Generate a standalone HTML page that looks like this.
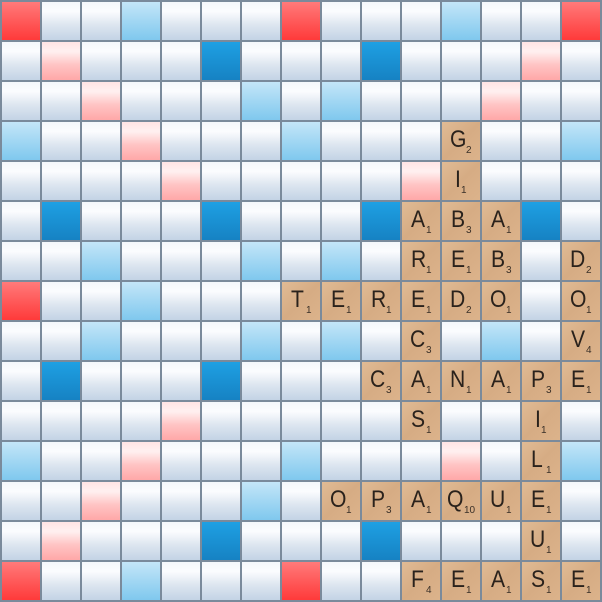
<!DOCTYPE html>
<html><head><meta charset="utf-8"><style>
html,body{margin:0;padding:0;background:#7a8a9b;}
#b{position:relative;width:602px;height:602px;background:#7a8a9b;}
.c{position:absolute;width:38px;height:38px;background:linear-gradient(#f4f7fb 0%,#fbfcfe 25%,#dde6f0 60%,#c3d3e5 100%);}
.tw{background:linear-gradient(#ff7a7a,#ff3a3a);}
.dw{background:linear-gradient(#ffe4e4 0%,#fff0f0 25%,#ffc4c4 60%,#ffa8a8 100%);}
.tl{background:linear-gradient(#1ea0e3,#1682c3);}
.dl{background:linear-gradient(#c4e6f8,#7fc8ee);}
.t{background:linear-gradient(135deg,#e0bb95,#d6ac84 50%,#dcb38b);font-family:"Liberation Sans",sans-serif;color:#2a221c;}
.t span{position:absolute;top:6px;font-size:24px;line-height:1;transform:scaleX(0.88);transform-origin:left top;}
.t i{position:absolute;font-style:normal;font-size:10px;line-height:1;top:24px;color:#3a3028;}
</style></head><body><div id="b"></div>
<script>
var TW=[[0,0],[0,7],[0,14],[7,0],[7,14],[14,0],[14,7],[14,14]];
var DW=[[1,1],[2,2],[3,3],[4,4],[10,10],[11,11],[12,12],[13,13],[1,13],[2,12],[3,11],[4,10],[10,4],[11,3],[12,2],[13,1],[7,7]];
var TL=[[1,5],[1,9],[5,1],[5,5],[5,9],[5,13],[9,1],[9,5],[9,9],[9,13],[13,5],[13,9]];
var DL=[[0,3],[0,11],[2,6],[2,8],[3,0],[3,7],[3,14],[6,2],[6,6],[6,8],[6,12],[7,3],[7,11],[8,2],[8,6],[8,8],[8,12],[11,0],[11,7],[11,14],[12,6],[12,8],[14,3],[14,11]];
var T={"3,11":"G2","4,11":"I1","5,10":"A1","5,11":"B3","5,12":"A1","6,10":"R1","6,11":"E1","6,12":"B3","6,14":"D2",
"7,7":"T1","7,8":"E1","7,9":"R1","7,10":"E1","7,11":"D2","7,12":"O1","7,14":"O1","8,10":"C3","8,14":"V4",
"9,9":"C3","9,10":"A1","9,11":"N1","9,12":"A1","9,13":"P3","9,14":"E1","10,10":"S1","10,13":"I1","11,13":"L1",
"12,8":"O1","12,9":"P3","12,10":"A1","12,11":"Q10","12,12":"U1","12,13":"E1","13,13":"U1",
"14,10":"F4","14,11":"E1","14,12":"A1","14,13":"S1","14,14":"E1"};
var m={};TW.forEach(function(p){m[p]="tw"});DW.forEach(function(p){m[p]="dw"});TL.forEach(function(p){m[p]="tl"});DL.forEach(function(p){m[p]="dl"});
var h="";
for(var r=0;r<15;r++)for(var c=0;c<15;c++){
var k=r+","+c,s="left:"+(40*c+2)+"px;top:"+(40*r+2)+"px";
if(T[k]){var L=T[k][0],v=T[k].slice(1),w=(L=="Q"?16:(L=="I"?5:(L=="O"||L=="D"||L=="C"||L=="N"||L=="U"||L=="G"?15:14)));
var lx=Math.round((38-w-1-(v.length*6))/2);
h+='<div class="c t" style="'+s+'"><span style="left:'+lx+'px">'+L+'</span><i style="left:'+(lx+w+1)+'px">'+v+'</i></div>';}
else h+='<div class="c '+(m[k]||"")+'" style="'+s+'"></div>';}
document.getElementById("b").innerHTML=h;
</script></body></html>
